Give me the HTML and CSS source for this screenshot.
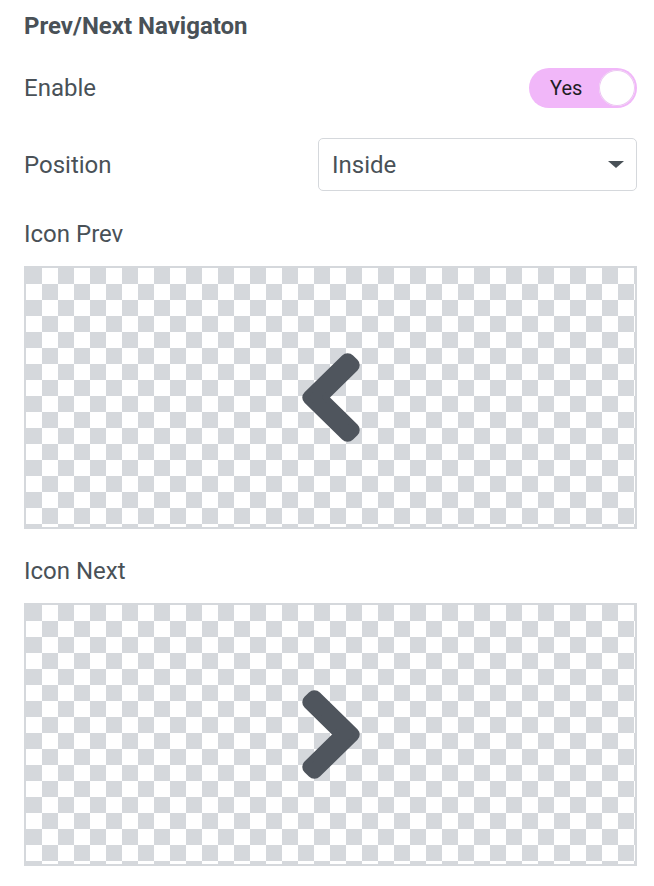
FILE: index.html
```html
<!DOCTYPE html>
<html>
<head>
<meta charset="utf-8">
<link rel="stylesheet" href="styles.css">
</head>
<body>
<div class="panel">
  <h2 class="title">Prev/Next Navigaton</h2>
  <div class="row row-enable">
    <span class="label">Enable</span>
    <div class="toggle">
      <span class="toggle-text">Yes</span>
      <span class="knob"></span>
    </div>
  </div>
  <div class="row row-position">
    <span class="label">Position</span>
    <div class="select">
      <span class="select-text">Inside</span>
      <span class="caret"></span>
    </div>
  </div>
  <div class="label block-label first">Icon Prev</div>
  <div class="icon-box">
    <svg class="chev" viewBox="10 20 300 472" width="58" height="89" preserveAspectRatio="none"><path fill="#4f555d" stroke="#4f555d" stroke-width="32" stroke-linejoin="round" d="M34.52 239.03L228.87 44.69c9.37-9.37 24.57-9.370 33.94 0l22.67 22.67c9.36 9.36 9.37 24.52.04 33.9L131.49 256l154.02 154.75c9.34 9.38 9.320 24.54-.04 33.9l-22.670 22.67c-9.37 9.37-24.57 9.37-33.94 0L34.52 272.97c-9.37-9.37-9.37-24.57 0-33.94z"/></svg>
  </div>
  <div class="label block-label">Icon Next</div>
  <div class="icon-box second">
    <svg class="chev" viewBox="10 20 300 472" width="58" height="89" preserveAspectRatio="none"><path fill="#4f555d" stroke="#4f555d" stroke-width="32" stroke-linejoin="round" d="M285.48 272.97L91.13 467.31c-9.37 9.37-24.57 9.37-33.94 0l-22.67-22.67c-9.36-9.36-9.37-24.52-.04-33.9L188.51 256 34.49 101.25c-9.34-9.38-9.32-24.54.04-33.9l22.67-22.67c9.37-9.37 24.57-9.37 33.94 0l194.340 194.33c9.37 9.37 9.37 24.57 0 33.96z"/></svg>
  </div>
</div>
</body>
</html>
```
FILE: styles.css
```css
* { box-sizing: border-box; }
html, body { margin: 0; padding: 0; background: #fff; }
body {
  font-family: Roboto, "Liberation Sans", sans-serif;
  color: #495157;
}
.panel {
  padding: 12px 17px 0 24px;
  width: 654px;
}
.title {
  margin: 0;
  font-size: 24px;
  font-weight: 700;
  line-height: 28px;
  color: #495157;
}
.row {
  display: flex;
  align-items: center;
  justify-content: space-between;
}
.row-enable {
  margin-top: 28px;
  height: 40px;
}
.label {
  font-size: 24px;
  line-height: 28px;
  color: #495157;
}
.toggle {
  width: 108px;
  height: 40px;
  border-radius: 20px;
  background: #f1b7f9;
  display: flex;
  align-items: center;
  justify-content: space-between;
  padding: 0 2px 0 21px;
}
.toggle-text {
  font-size: 20px;
  color: #1e1e24;
}
.knob {
  width: 36px;
  height: 36px;
  border-radius: 50%;
  background: #fff;
  box-shadow: 0 0 0 1px #ecc6f2 inset;
}
.row-position {
  margin-top: 30px;
  height: 53px;
}
.select {
  width: 319px;
  height: 53px;
  border: 1px solid #d5d8dc;
  border-radius: 5px;
  display: flex;
  align-items: center;
  justify-content: space-between;
  padding: 0 12px 0 13px;
}
.select-text {
  font-size: 24px;
  color: #495157;
}
.caret {
  width: 0;
  height: 0;
  border-left: 8px solid transparent;
  border-right: 8px solid transparent;
  border-top: 7px solid #495157;
}
.block-label.first { margin-top: 29px; }
.block-label { margin-top: 28px; }
.icon-box {
  margin-top: 18px;
  height: 263px;
  border: 2px solid #d5d8dc;
  display: flex;
  align-items: center;
  justify-content: center;
  background-color: #fff;
  background-image:
    linear-gradient(45deg, #d5d8dc 25%, transparent 25%, transparent 75%, #d5d8dc 75%),
    linear-gradient(45deg, #d5d8dc 25%, transparent 25%, transparent 75%, #d5d8dc 75%);
  background-size: 32px 32px;
  background-position: 16px 0, 0 16px;
}
.chev { display: block; }
```
